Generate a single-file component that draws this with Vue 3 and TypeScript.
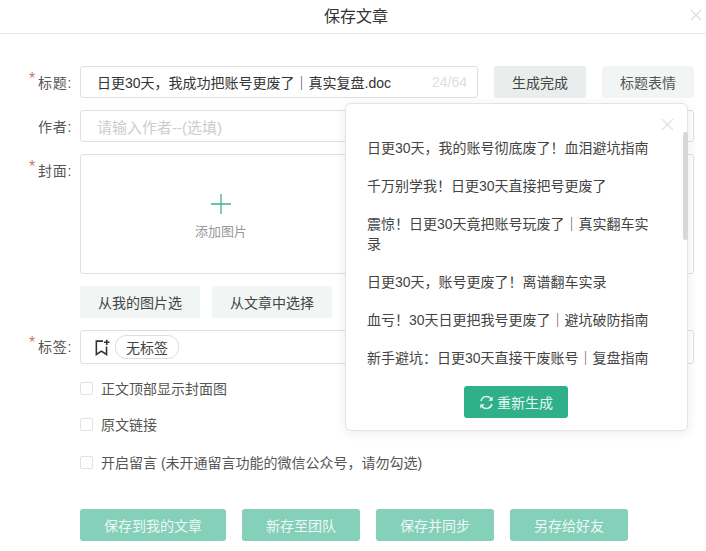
<script setup lang="ts">
const suggestions: string[] = [
  '日更30天，我的账号彻底废了！血泪避坑指南',
  '千万别学我！日更30天直接把号更废了',
  '震惊！日更30天竟把账号玩废了｜真实翻车实录',
  '日更30天，账号更废了！离谱翻车实录',
  '血亏！30天日更把我号更废了｜避坑破防指南',
  '新手避坑：日更30天直接干废账号｜复盘指南',
]
const options: string[] = ['正文顶部显示封面图', '原文链接', '开启留言 (未开通留言功能的微信公众号，请勿勾选)']
const actions = [
  { text: '保存到我的文章', cls: 'w146' },
  { text: '新存至团队', cls: 'w118' },
  { text: '保存并同步', cls: 'w118' },
  { text: '另存给好友', cls: 'w118' },
]
</script>

<template>
  <div class="dialog">
    <header class="head">
      <span class="head-title">保存文章</span>
      <svg class="close top-close" viewBox="0 0 12 12"><path d="M1 1l10 10M11 1L1 11" /></svg>
    </header>

    <main class="form">
      <div class="row first">
        <label class="label req">标题:</label>
        <div class="input title-input">
          <span class="title-text">日更30天，我成功把账号更废了｜真实复盘.doc</span>
          <span class="count">24/64</span>
        </div>
        <button class="btn done">生成完成</button>
        <button class="btn soft emoji">标题表情</button>
      </div>

      <div class="row">
        <label class="label">作者:</label>
        <div class="input grow"><span class="placeholder">请输入作者--(选填)</span></div>
      </div>

      <div class="row">
        <label class="label req">封面:</label>
        <div class="cover">
          <div class="cover-add">
            <svg class="plus" viewBox="0 0 20 20"><path d="M10 0v20M0 10h20" /></svg>
            <span class="cover-text">添加图片</span>
          </div>
        </div>
      </div>

      <div class="row pick">
        <button class="btn soft pick-btn">从我的图片选</button>
        <button class="btn soft pick-btn">从文章中选择</button>
      </div>

      <div class="row">
        <label class="label req">标签:</label>
        <div class="tags">
          <svg class="tag-icon" viewBox="0 0 16 16">
            <path d="M8.5 2H2.2v12.6L7 11.4l4.8 3.2V7" />
            <path d="M12 .6v5M9.4 3.1h5.2" />
          </svg>
          <span class="chip">无标签</span>
        </div>
      </div>

      <ul class="options">
        <li v-for="o in options" :key="o" class="option">
          <span class="check"></span>
          <span>{{ o }}</span>
        </li>
      </ul>

      <div class="actions">
        <button v-for="a in actions" :key="a.text" class="btn action" :class="a.cls">{{ a.text }}</button>
      </div>
    </main>

    <aside class="pop">
      <svg class="close pop-close" viewBox="0 0 12 12"><path d="M1 1l10 10M11 1L1 11" /></svg>
      <div class="scroll-thumb"></div>
      <ul class="list">
        <li v-for="s in suggestions" :key="s">{{ s }}</li>
      </ul>
      <button class="btn regen">
        <svg class="regen-icon" viewBox="0 0 16 16">
          <path d="M2.2 6.4A6 6 0 0 1 13 4.2" />
          <path d="M13.8 9.6A6 6 0 0 1 3 11.8" />
          <path class="fill" d="M14.6 1.6v4.6H10z" />
          <path class="fill" d="M1.4 14.4V9.8H6z" />
        </svg>
        重新生成
      </button>
    </aside>
  </div>
</template>

<style>
html, body { margin: 0; background: #fff; }
</style>

<style scoped>
.dialog {
  position: relative;
  width: 706px;
  height: 551px;
  overflow: hidden;
  background: #fff;
  color: #333;
  font-family: "Liberation Sans", "Noto Sans CJK SC", sans-serif;
  font-size: 14px;
}
.head {
  height: 33px;
  border-bottom: 1px solid #e8e8e8;
  display: flex;
  align-items: center;
  justify-content: center;
}
.head-title { font-size: 16px; color: #333; margin-left: 6px; margin-bottom: 3px; }
.close { position: absolute; fill: none; stroke: #dcdcdc; stroke-width: 1.1; }
.top-close { left: 690px; top: 9px; width: 12px; height: 12px; }
.form { padding: 32px 12px 0 0; display: flex; flex-direction: column; }
.row { display: flex; align-items: flex-start; margin-bottom: 12px; }
.label {
  width: 72px;
  height: 32px;
  margin-right: 8px;
  text-align: right;
  line-height: 34px;
  letter-spacing: 0.7px;
  color: #555;
  position: relative;
  flex: none;
}
.req::before {
  content: "*";
  position: absolute;
  left: 29px;
  top: -4px;
  color: #c47a6e;
  font-size: 16px;
}
.input {
  height: 32px;
  border: 1px solid #dcdfe6;
  border-radius: 3px;
  box-sizing: border-box;
  display: flex;
  align-items: center;
  padding: 0 16px;
}
.grow { flex: 1; }
.title-input { width: 398px; justify-content: space-between; padding-right: 10px; }
.title-text { color: #333; white-space: nowrap; }
.count { color: #e0e0e0; font-size: 14px; }
.placeholder { color: #cdcdcd; font-size: 15px; }
.btn {
  border: 0;
  font: inherit;
  border-radius: 3px;
  height: 32px;
  padding: 0;
  cursor: pointer;
}
.done { width: 92px; margin-left: 16px; background: #e9eeec; color: #444; }
.soft { background: #f1f5f3; color: #555; }
.emoji { width: 92px; margin-left: 16px; }
.cover {
  flex: 1;
  height: 120px;
  border: 1px solid #dcdfe6;
  border-radius: 3px;
  box-sizing: border-box;
}
.cover-add {
  width: 280px;
  padding-top: 39px;
  display: flex;
  flex-direction: column;
  align-items: center;
}
.plus { width: 20px; height: 20px; fill: none; stroke: #3fb094; stroke-width: 1.3; }
.cover-text { margin-top: 7px; font-size: 13px; color: #999; }
.pick { margin-left: 80px; gap: 12px; }
.pick-btn { width: 120px; color: #444; }
.tags {
  flex: 1;
  height: 34px;
  border: 1px solid #dcdfe6;
  border-radius: 3px;
  box-sizing: border-box;
  display: flex;
  align-items: center;
  padding-left: 13px;
  gap: 4px;
}
.tag-icon { width: 17px; height: 17px; fill: none; stroke: #333; stroke-width: 1.5; }
.chip {
  height: 22px;
  line-height: 24px;
  padding: 0 10px;
  border: 1px solid #ddd;
  border-radius: 11px;
  color: #444;
}
.options { list-style: none; margin: 2px 0 0 80px; padding: 0; }
.option { display: flex; align-items: center; height: 20px; margin-bottom: 16px; gap: 8px; color: #555; }
.option:nth-child(2) { margin-bottom: 18px; }
.check {
  width: 11px;
  height: 11px;
  border: 1px solid #e2e2e2;
  border-radius: 2px;
  flex: none;
}
.actions { margin: 21px 0 0 80px; display: flex; gap: 16px; }
.action { background: #84d0b9; color: #eef8f5; }
.w146 { width: 146px; }
.w118 { width: 118px; }
.pop {
  position: absolute;
  left: 345px;
  top: 103px;
  width: 343px;
  height: 328px;
  box-sizing: border-box;
  background: #fff;
  border: 1px solid #e4e4e4;
  border-radius: 6px;
  box-shadow: 0 2px 12px rgba(0, 0, 0, 0.08);
  padding: 34px 32px 0 21px;
}
.pop-close { left: 315px; top: 14px; width: 13px; height: 13px; }
.scroll-thumb {
  position: absolute;
  left: 337px;
  top: 28px;
  width: 5px;
  height: 108px;
  background: #d8d8d8;
  border-radius: 2px;
}
.list { list-style: none; margin: 0; padding: 0; }
.list li { line-height: 20px; margin-bottom: 18px; color: #444; }
.regen {
  display: flex;
  align-items: center;
  justify-content: center;
  gap: 3px;
  width: 104px;
  margin: 0 0 0 97px;
  background: #2fb089;
  color: #e6f6f1;
}
.regen-icon { width: 15px; height: 15px; fill: none; stroke: #e6f6f1; stroke-width: 1.6; }
.regen-icon .fill { fill: #e6f6f1; stroke: none; }
</style>
